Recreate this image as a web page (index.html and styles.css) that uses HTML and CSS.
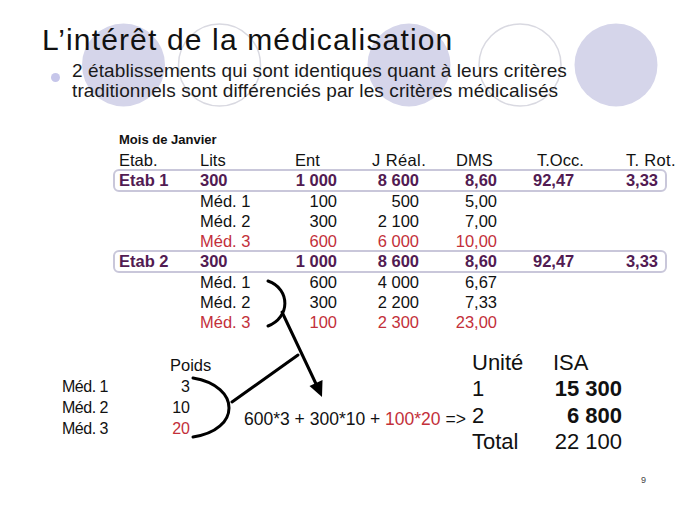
FILE: index.html
```html
<!DOCTYPE html>
<html lang="fr">
<head>
<meta charset="utf-8">
<title>L’intérêt de la médicalisation</title>
<link rel="stylesheet" href="styles.css">
</head>
<body>
<div class="slide">
  <svg class="deco" width="689" height="517" viewBox="0 0 689 517" aria-hidden="true">
    <circle cx="123.5" cy="65" r="41.5" fill="#d5d5ea"/>
    <circle cx="219.5" cy="65" r="41" fill="none" stroke="#d9d9e1" stroke-width="1.5"/>
    <circle cx="409" cy="65" r="41.5" fill="#d5d5ea"/>
    <circle cx="520" cy="65" r="41" fill="none" stroke="#d9d9e1" stroke-width="1.5"/>
    <circle cx="616" cy="65" r="41.5" fill="#d5d5ea"/>
  </svg>

  <h1 class="title">L’intérêt de la médicalisation</h1>

  <div class="bullet">
    <span class="dot"></span>
    <p class="bullet-text">2 établissements qui sont identiques quant à leurs critères<br>traditionnels sont différenciés par les critères médicalisés</p>
  </div>

  <div class="table">
    <div class="caption">Mois de Janvier</div>
    <div class="row head">
      <span>Etab.</span><span>Lits</span><span class="h-ent">Ent</span><span class="h-jr">J Réal.</span><span class="h-dms">DMS</span><span class="h-occ">T.Occ.</span><span class="h-rot">T. Rot.</span>
    </div>
    <div class="row etab">
      <span>Etab 1</span><span>300</span><span class="r">1 000</span><span class="r">8 600</span><span class="r">8,60</span><span class="occ">92,47</span><span class="r rot">3,33</span>
    </div>
    <div class="row">
      <span></span><span>Méd. 1</span><span class="r">100</span><span class="r">500</span><span class="r">5,00</span><span></span><span></span>
    </div>
    <div class="row">
      <span></span><span>Méd. 2</span><span class="r">300</span><span class="r">2 100</span><span class="r">7,00</span><span></span><span></span>
    </div>
    <div class="row red">
      <span></span><span>Méd. 3</span><span class="r">600</span><span class="r">6 000</span><span class="r">10,00</span><span></span><span></span>
    </div>
    <div class="row etab">
      <span>Etab 2</span><span>300</span><span class="r">1 000</span><span class="r">8 600</span><span class="r">8,60</span><span class="occ">92,47</span><span class="r rot">3,33</span>
    </div>
    <div class="row">
      <span></span><span>Méd. 1</span><span class="r">600</span><span class="r">4 000</span><span class="r">6,67</span><span></span><span></span>
    </div>
    <div class="row">
      <span></span><span>Méd. 2</span><span class="r">300</span><span class="r">2 200</span><span class="r">7,33</span><span></span><span></span>
    </div>
    <div class="row red">
      <span></span><span>Méd. 3</span><span class="r">100</span><span class="r">2 300</span><span class="r">23,00</span><span></span><span></span>
    </div>
  </div>

  <div class="bottom">
    <div class="weights">
      <span></span><span class="poids">Poids</span>
      <span class="lbl">Méd. 1</span><span class="r">3</span>
      <span class="lbl">Méd. 2</span><span class="r">10</span>
      <span class="lbl">Méd. 3</span><span class="r redtxt">20</span>
    </div>
    <div class="formula">600*3 + 300*10 + <span class="redtxt">100*20</span> =&gt;</div>
    <div class="isa">
      <span>Unité</span><span class="isa-h">ISA</span>
      <span>1</span><span class="r b">15 300</span>
      <span>2</span><span class="r b">6 800</span>
      <span>Total</span><span class="r">22 100</span>
    </div>
  </div>

  <div class="pageno">9</div>

  <svg class="arrows" width="689" height="517" viewBox="0 0 689 517" aria-hidden="true">
    <g fill="none" stroke="#000" stroke-width="3" stroke-linecap="round">
      <path d="M268 281 C 291 289, 290 318, 268 326"/>
      <path d="M282 312 L 317 386"/>
      <path d="M298 355 L 232 402"/>
      <path d="M193 378 C 241 386, 241 430, 193 437"/>
    </g>
    <polygon points="322,397 322.5,380 309.5,386" fill="#000"/>
  </svg>
</div>
</body>
</html>
```

FILE: styles.css
```css
* { box-sizing: border-box; }

html, body {
  margin: 0;
  padding: 0;
  background: #fff;
}

body {
  font-family: "Liberation Sans", Arial, sans-serif;
  color: #111;
}

.slide {
  position: relative;
  width: 689px;
  height: 517px;
  overflow: hidden;
  background: #fff;
  padding-top: 23px;
}

.deco {
  position: absolute;
  left: 0;
  top: 0;
  z-index: 0;
}

.arrows {
  position: absolute;
  left: 0;
  top: 0;
  z-index: 2;
  pointer-events: none;
}

.title, .bullet, .table, .bottom, .pageno {
  position: relative;
  z-index: 1;
}

.title {
  margin: 0 0 0 42px;
  font-size: 30px;
  line-height: 34px;
  font-weight: normal;
  color: #111;
  letter-spacing: 1.15px;
  white-space: nowrap;
}

.bullet {
  display: flex;
  align-items: flex-start;
  margin: 4px 0 0 51px;
}

.dot {
  width: 9px;
  height: 9px;
  border-radius: 50%;
  background: #c6c6ea;
  margin-top: 12px;
  margin-right: 12px;
  flex: none;
}

.bullet-text {
  margin: 0;
  font-size: 19px;
  line-height: 20px;
  letter-spacing: 0.1px;
  color: #1a1a1a;
  white-space: nowrap;
}

.table {
  margin: 29px 0 0 113px;
  width: 554px;
  font-size: 16.5px;
  color: #111;
}

.caption {
  height: 20px;
  line-height: 20px;
  font-size: 13px;
  font-weight: bold;
  padding-left: 6px;
}

.row {
  display: grid;
  grid-template-columns: 81px 90px 48px 82px 78px 122px 40px;
  height: 20.25px;
  line-height: 20.25px;
  padding: 0 7px 0 6px;
  white-space: nowrap;
}

.row > span {
  white-space: nowrap;
}

.row .r { text-align: right; padding-right: 1px; }
.row .rot { padding-right: 2px; }
.row .occ { padding-left: 35px; }

.head .h-ent { padding-left: 5px; }
.head .h-jr { padding-left: 34px; letter-spacing: 0.4px; }
.head .h-dms { padding-left: 36px; }
.head .h-occ { padding-left: 39px; }
.head .h-rot { padding-left: 6px; letter-spacing: 0.3px; }

.row.etab {
  height: 22.25px;
  line-height: 18.25px;
  margin: -1px 0;
  border: 2px solid #c9c7da;
  border-radius: 6px;
  padding: 0 5px 0 4px;
  font-weight: bold;
  color: #521b52;
  background: #fff;
}

.row.red { color: #c3303a; }

.redtxt { color: #c3303a; }

.bottom {
  display: flex;
  align-items: flex-start;
  margin-top: 17.75px;
  padding-left: 62px;
  height: 105px;
}

.weights {
  display: grid;
  grid-template-columns: 108px 20px;
  width: 128px;
  margin-top: 4.5px;
  font-size: 16px;
  line-height: 21px;
  color: #111;
}

.weights .lbl { letter-spacing: -0.5px; }
.weights .r { text-align: right; }
.weights .poids { white-space: nowrap; font-size: 16.5px; }

.formula {
  margin: 58.5px 0 0 54px;
  width: 228px;
  font-size: 17.5px;
  line-height: 21px;
  white-space: nowrap;
  color: #111;
}

.isa {
  display: grid;
  grid-template-columns: 81px 69px;
  font-size: 22px;
  line-height: 26.3px;
  color: #111;
  white-space: nowrap;
}

.isa .r { text-align: right; }
.isa .b { font-weight: bold; }

.pageno {
  margin: 19px 0 0 641px;
  font-size: 9px;
  line-height: 12px;
  color: #444;
}
```
